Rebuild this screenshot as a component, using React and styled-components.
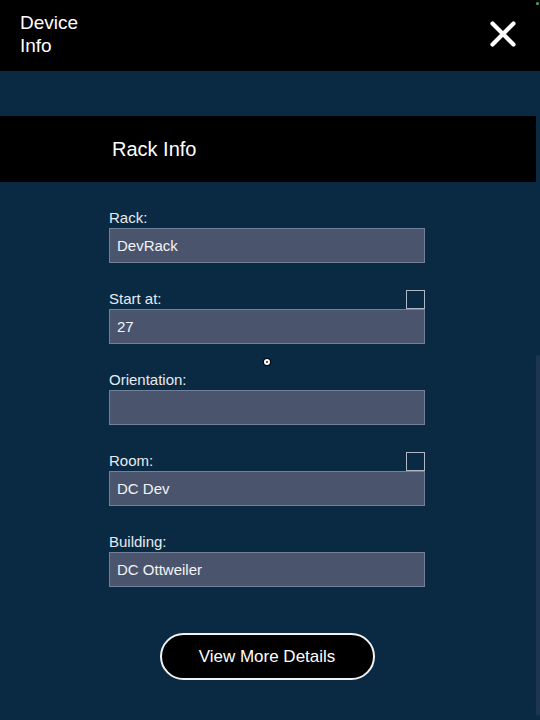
import React from "react";
import styled, { createGlobalStyle } from "styled-components";

const Global = createGlobalStyle`
  html, body { margin: 0; padding: 0; background: #0a2a44; }
  body { font-family: "Liberation Sans", Arial, sans-serif; }
  #root { min-height: 720px; }
`;

const Page = styled.div`
  position: relative;
  width: 540px;
  height: 720px;
  overflow: hidden;
  background: #0a2a44;
  display: flex;
  flex-direction: column;
`;

const Header = styled.header`
  height: 71px;
  box-sizing: border-box;
  background: #000;
  display: flex;
  justify-content: space-between;
  align-items: flex-start;
  padding: 11px 24px 0 20px;
`;

const Title = styled.h1`
  margin: 0;
  font-size: 19px;
  line-height: 23px;
  font-weight: 400;
  color: #fff;
  width: 70px;
`;

const CloseButton = styled.button`
  margin-top: 10px;
  width: 26px;
  height: 26px;
  padding: 0;
  border: 0;
  background: transparent;
  display: flex;
  cursor: pointer;
`;

const Content = styled.main`
  flex: 1;
  display: flex;
  flex-direction: column;
  padding: 45px 4px 0 0;
`;

const SectionBar = styled.div`
  height: 66px;
  background: #000;
  display: flex;
  align-items: center;
  padding-left: 112px;
  color: #fff;
  font-size: 20px;
`;

const Form = styled.form`
  width: 316px;
  margin: 26px 0 0 109px;
  display: flex;
  flex-direction: column;
  gap: 26px;
`;

const Field = styled.div`
  display: flex;
  flex-direction: column;
`;

const LabelRow = styled.div`
  height: 20px;
  display: flex;
  justify-content: space-between;
  align-items: flex-end;
`;

const Label = styled.label`
  align-self: center;
  font-size: 15px;
  line-height: 20px;
  color: #e6ebf0;
`;

const Check = styled.span`
  width: 19px;
  height: 19px;
  box-sizing: border-box;
  border: 1.5px solid #aeb8c6;
  background: transparent;
`;

const Input = styled.div`
  height: 35px;
  box-sizing: border-box;
  background: #4a556d;
  border: 1.5px solid #71819a;
  padding: 0 0 0 7px;
  display: flex;
  align-items: center;
  font-size: 15px;
  color: #f2f4f7;
`;

const ButtonRow = styled.div`
  display: flex;
  justify-content: center;
  margin-top: 20px;
`;

const MoreButton = styled.button`
  width: 215px;
  height: 47px;
  box-sizing: border-box;
  border-radius: 24px;
  background: #000;
  border: 2px solid #f2f2f2;
  color: #fff;
  font-family: "Liberation Sans", Arial, sans-serif;
  font-size: 17px;
  cursor: pointer;
`;

const Cursor = styled.span`
  position: absolute;
  left: 264px;
  top: 359px;
  width: 6px;
  height: 6px;
  box-sizing: border-box;
  border-radius: 50%;
  border: 2px solid #fff;
  background: #0a2a44;
  box-shadow: 0 0 0 1px #000;
`;

const ScrollThumb = styled.span`
  position: absolute;
  right: 0;
  top: 355px;
  width: 4px;
  height: 361px;
  background: #1d3550;
  border-radius: 2px;
`;

const StatusDot = styled.span`
  position: absolute;
  right: 1px;
  top: 2px;
  width: 3px;
  height: 3px;
  border-radius: 50%;
  background: #2fb85a;
`;

const fields = [
  { label: "Rack:", value: "DevRack" },
  { label: "Start at:", value: "27", check: true },
  { label: "Orientation:", value: "" },
  { label: "Room:", value: "DC Dev", check: true },
  { label: "Building:", value: "DC Ottweiler" },
];

export default function App() {
  return (
    <Page>
      <Global />
      <Header>
        <Title>Device Info</Title>
        <CloseButton aria-label="Close">
          <svg width="26" height="26" viewBox="0 0 26 26">
            <path d="M2.5 2.5 L23.5 23.5 M23.5 2.5 L2.5 23.5" stroke="#fff" strokeWidth="4.2" strokeLinecap="round" />
          </svg>
        </CloseButton>
      </Header>
      <Content>
        <SectionBar>Rack Info</SectionBar>
        <Form onSubmit={(e) => e.preventDefault()}>
          {fields.map((f) => (
            <Field key={f.label}>
              <LabelRow>
                <Label>{f.label}</Label>
                {f.check && <Check />}
              </LabelRow>
              <Input>{f.value}</Input>
            </Field>
          ))}
          <ButtonRow>
            <MoreButton type="button">View More Details</MoreButton>
          </ButtonRow>
        </Form>
      </Content>
      <Cursor />
      <ScrollThumb />
      <StatusDot />
    </Page>
  );
}
